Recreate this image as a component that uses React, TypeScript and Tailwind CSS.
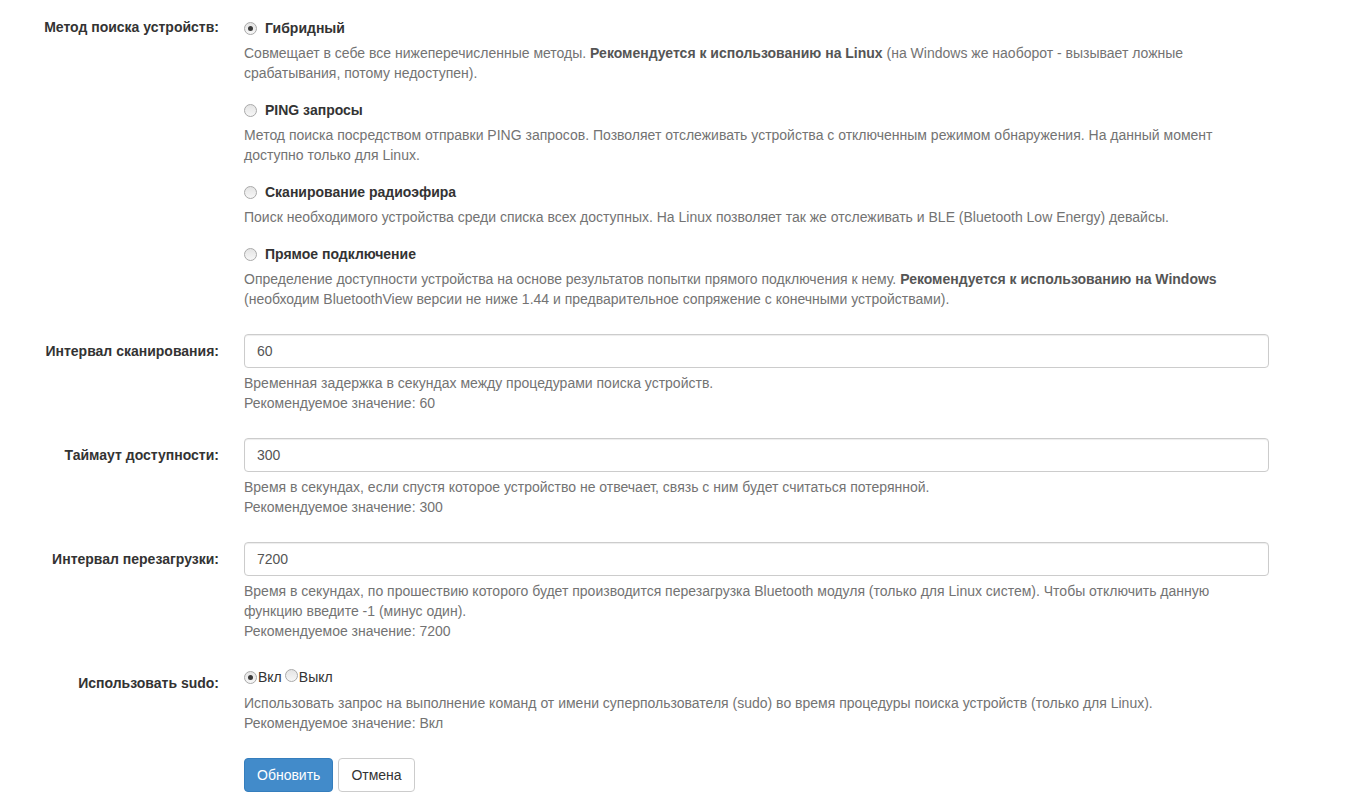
import type { ReactNode } from "react";

type RadioOption = {
  title: string;
  checked?: boolean;
  help: ReactNode;
};

const options: RadioOption[] = [
  {
    title: "Гибридный",
    checked: true,
    help: (
      <>
        Совмещает в себе все нижеперечисленные методы.{" "}
        <strong className="text-[#555]">Рекомендуется к использованию на Linux</strong> (на Windows же
        наоборот - вызывает ложные срабатывания, потому недоступен).
      </>
    ),
  },
  {
    title: "PING запросы",
    help: "Метод поиска посредством отправки PING запросов. Позволяет отслеживать устройства с отключенным режимом обнаружения. На данный момент доступно только для Linux.",
  },
  {
    title: "Сканирование радиоэфира",
    help: "Поиск необходимого устройства среди списка всех доступных. На Linux позволяет так же отслеживать и BLE (Bluetooth Low Energy) девайсы.",
  },
  {
    title: "Прямое подключение",
    help: (
      <>
        Определение доступности устройства на основе результатов попытки прямого подключения к нему.{" "}
        <strong className="text-[#555]">Рекомендуется к использованию на Windows</strong> (необходим
        BluetoothView версии не ниже 1.44 и предварительное сопряжение с конечными устройствами).
      </>
    ),
  },
];

const inputs = [
  {
    label: "Интервал сканирования:",
    value: "60",
    help: ["Временная задержка в секундах между процедурами поиска устройств.", "Рекомендуемое значение: 60"],
  },
  {
    label: "Таймаут доступности:",
    value: "300",
    help: [
      "Время в секундах, если спустя которое устройство не отвечает, связь с ним будет считаться потерянной.",
      "Рекомендуемое значение: 300",
    ],
  },
  {
    label: "Интервал перезагрузки:",
    value: "7200",
    help: [
      "Время в секундах, по прошествию которого будет производится перезагрузка Bluetooth модуля (только для Linux систем). Чтобы отключить данную функцию введите -1 (минус один).",
      "Рекомендуемое значение: 7200",
    ],
  },
];

function RadioDot({ checked }: { checked?: boolean }) {
  return (
    <span className="inline-grid h-[13px] w-[13px] shrink-0 place-items-center rounded-full border border-[#a9a9a9] bg-gradient-to-b from-[#e4e4e4] to-[#f7f7f7]">
      {checked && <span className="h-[5px] w-[5px] rounded-full bg-[#3a3a3a]" />}
    </span>
  );
}

function Label({ children }: { children: ReactNode }) {
  return <div className="w-[219px] shrink-0 pt-[7px] text-right font-bold text-[#333]">{children}</div>;
}

export default function App() {
  return (
    <div className="min-h-screen bg-white pt-[10px] font-['Liberation_Sans',Arial,sans-serif] text-sm leading-5 text-[#333]">
      <form className="flex flex-col">
        <div className="flex">
          <Label>Метод поиска устройств:</Label>
          <div className="ml-[25px] w-[1025px] pt-[8px]">
            {options.map((o, i) => (
              <div key={o.title} className={i === options.length - 1 ? "mb-[25px]" : "mb-[17px]"}>
                <label className="flex h-5 items-center gap-2 font-bold">
                  <RadioDot checked={o.checked} />
                  {o.title}
                </label>
                <div className="mt-[5px] text-[#737373]">{o.help}</div>
              </div>
            ))}
          </div>
        </div>

        {inputs.map((f) => (
          <div key={f.label} className="mb-[15px] flex">
            <Label>{f.label}</Label>
            <div className="ml-[25px] w-[1025px]">
              <input
                readOnly
                defaultValue={f.value}
                className="block h-[34px] w-full rounded-[4px] border border-[#ccc] px-3 text-[#555] shadow-[inset_0_1px_1px_rgba(0,0,0,0.075)] outline-none"
              />
              <div className="mb-[10px] mt-[5px] text-[#737373]">
                {f.help.map((h) => (
                  <p key={h}>{h}</p>
                ))}
              </div>
            </div>
          </div>
        ))}

        <div className="mb-[15px] flex">
          <Label>Использовать sudo:</Label>
          <div className="ml-[25px] w-[1025px] pt-[1px]">
            <div className="flex h-5 items-center">
              <RadioDot checked />
              <span className="ml-px">Вкл</span>
              <span className="ml-[3px]">
                <RadioDot />
              </span>
              <span className="ml-px">Выкл</span>
            </div>
            <div className="mb-[10px] mt-[6px] text-[#737373]">
              <p>
                Использовать запрос на выполнение команд от имени суперпользователя (sudo) во время процедуры
                поиска устройств (только для Linux).
              </p>
              <p>Рекомендуемое значение: Вкл</p>
            </div>
          </div>
        </div>

        <div className="ml-[244px] flex gap-[5px]">
          <button
            type="button"
            className="h-[34px] rounded-[4px] border border-[#357ebd] bg-[#428bca] px-3 text-white"
          >
            Обновить
          </button>
          <button type="button" className="h-[34px] rounded-[4px] border border-[#ccc] bg-white px-3 text-[#333]">
            Отмена
          </button>
        </div>
      </form>
    </div>
  );
}
